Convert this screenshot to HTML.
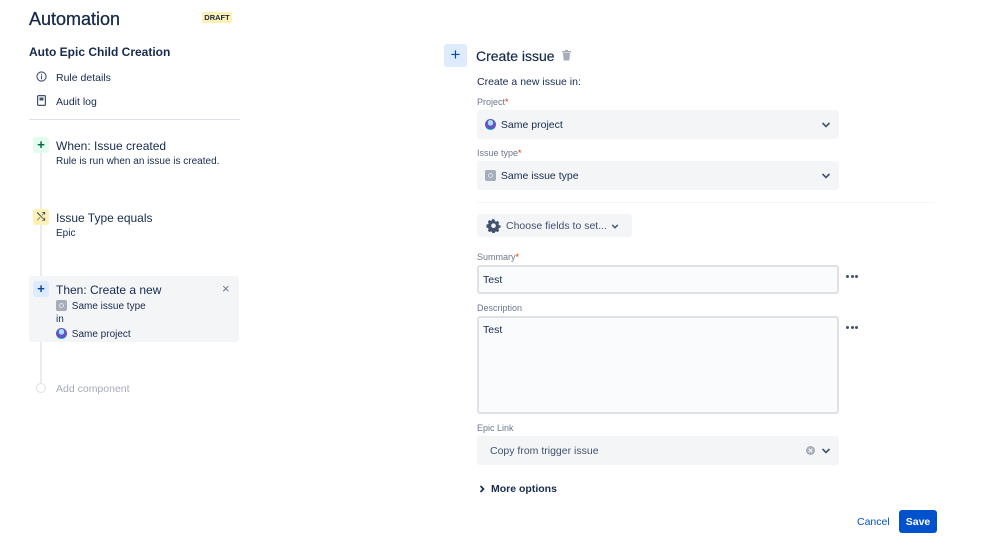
<!DOCTYPE html>
<html><head><meta charset="utf-8"><style>
*{box-sizing:border-box;margin:0;padding:0}
body{width:999px;height:553px;background:#fff;font-family:"Liberation Sans",sans-serif;color:#172b4d;position:relative;overflow:hidden}
.a{position:absolute;white-space:nowrap}
.ic{position:absolute;width:16px;height:16px;border-radius:3px;font-size:13px;line-height:16px;text-align:center}
.lbl{position:absolute;font-size:9px;color:#6b778c}
.lbl b{color:#de350b;font-weight:normal}
.sel{position:absolute;left:477px;width:362px;background:#f4f5f7;border-radius:3px;font-size:10.5px}
.chev{position:absolute;right:8px;top:50%;margin-top:-4px}
.inp{position:absolute;left:477px;width:362px;background:#fafbfc;border:2px solid #dfe1e6;border-radius:3px;font-size:10.5px;padding-left:4px}
.dots{position:absolute;left:846px;width:14px;height:3px}
.dots i{float:left;width:3px;height:3px;border-radius:50%;background:#42526e;margin-right:1.5px}
.proj{display:inline-block;width:11px;height:11px;border-radius:50%;background:radial-gradient(circle at 50% 35%,#a3e1ff 0 30%,#6554c0 31% 70%,#00b8d9 71%);vertical-align:-2px;margin-right:2px}
.typ{display:inline-block;width:11px;height:11px;border-radius:2px;background:#a5adba;vertical-align:-2px;position:relative;margin-right:2px}
.typ:after{content:"";position:absolute;left:3px;top:3px;width:5px;height:5px;border-radius:50%;border:1px solid #dfe1e6;box-sizing:border-box}
</style></head><body>
<div class="a" style="left:29px;top:9px;font-size:18px;-webkit-text-stroke:.3px #172b4d">Automation</div>
<div class="a" style="left:202px;top:12px;width:30px;height:11px;background:#fff0b3;border-radius:2px;font-size:7.5px;font-weight:bold;line-height:11px;text-align:center;color:#172b4d">DRAFT</div>
<div class="a" style="left:29px;top:45px;font-size:12px;font-weight:bold">Auto Epic Child Creation</div>
<svg class="a" style="left:36px;top:71px" width="11" height="11" viewBox="0 0 12 12"><circle cx="6" cy="6" r="5" fill="none" stroke="#42526e" stroke-width="1.2"/><rect x="5.4" y="5" width="1.2" height="4" fill="#42526e"/><circle cx="6" cy="3.5" r=".7" fill="#42526e"/></svg>
<div class="a" style="left:56px;top:72px;font-size:10.5px">Rule details</div>
<svg class="a" style="left:37px;top:95px" width="9" height="11" viewBox="0 0 9 11"><rect x=".6" y=".6" width="7.8" height="9.8" rx="1" fill="none" stroke="#42526e" stroke-width="1.2"/><rect x="2.5" y="2.5" width="4" height="3" fill="#42526e"/></svg>
<div class="a" style="left:56px;top:96px;font-size:10.5px">Audit log</div>
<div class="a" style="left:29px;top:119px;width:211px;height:1px;background:#dfe1e6"></div>
<div class="a" style="left:40px;top:150px;width:2px;height:236px;background:#ebecf0"></div>
<div class="a" style="left:29px;top:276px;width:210px;height:66px;background:#f4f5f7;border-radius:3px"></div>
<div class="ic" style="left:33px;top:137px;background:#e3fcef;color:#006644;font-weight:bold">+</div>
<div class="a" style="left:56px;top:139px;font-size:12px">When: Issue created</div>
<div class="a" style="left:56px;top:156px;font-size:10px">Rule is run when an issue is created.</div>
<div class="ic" style="left:33px;top:209px;background:#fff0b3;color:#172b4d;font-size:11px">⤭</div>
<div class="a" style="left:56px;top:211px;font-size:12px">Issue Type equals</div>
<div class="a" style="left:56px;top:228px;font-size:10px">Epic</div>
<div class="ic" style="left:33px;top:281px;background:#deebff;color:#0747a6;font-weight:bold">+</div>
<div class="a" style="left:56px;top:283px;font-size:12px">Then: Create a new</div>
<div class="a" style="left:222px;top:281px;font-size:13px;color:#6b778c">×</div>
<div class="a" style="left:56px;top:300px;font-size:10px"><span class="typ"></span> Same issue type</div>
<div class="a" style="left:56px;top:314px;font-size:10px">in</div>
<div class="a" style="left:56px;top:328px;font-size:10px"><span class="proj"></span> Same project</div>
<div class="a" style="left:36px;top:383px;width:10px;height:10px;border-radius:50%;border:1px solid #dfe1e6;background:#fff"></div>
<div class="a" style="left:56px;top:383px;font-size:10.5px;color:#a5adba">Add component</div>

<div class="a" style="left:444px;top:44px;width:23px;height:23px;background:#deebff;border-radius:3px;color:#0747a6;font-size:17px;line-height:22px;text-align:center">+</div>
<div class="a" style="left:476px;top:48px;font-size:14px;-webkit-text-stroke:.2px #172b4d">Create issue</div>
<svg class="a" style="left:562px;top:50px" width="9" height="11" viewBox="0 0 9 11"><rect x="0" y="1" width="9" height="1.5" fill="#a5adba"/><rect x="3" y="0" width="3" height="1.5" fill="#a5adba"/><path d="M1 3h7l-.7 7.5H1.7z" fill="#a5adba"/></svg>
<div class="a" style="left:477px;top:76px;font-size:10.5px">Create a new issue in:</div>
<div class="lbl" style="left:477px;top:97px">Project<b>*</b></div>
<div class="sel" style="top:110px;height:29px"><div class="a" style="left:8px;top:9px"><span class="proj"></span> Same project</div><svg class="chev" width="10" height="8" viewBox="0 0 10 8"><path d="M1.5 2l3.5 3.5L8.5 2" fill="none" stroke="#42526e" stroke-width="1.6"/></svg></div>
<div class="lbl" style="left:477px;top:148px">Issue type<b>*</b></div>
<div class="sel" style="top:161px;height:29px"><div class="a" style="left:8px;top:9px"><span class="typ"></span> Same issue type</div><svg class="chev" width="10" height="8" viewBox="0 0 10 8"><path d="M1.5 2l3.5 3.5L8.5 2" fill="none" stroke="#42526e" stroke-width="1.6"/></svg></div>
<div class="a" style="left:477px;top:202px;width:458px;height:1px;background:#f4f5f7"></div>
<div class="a" style="left:477px;top:214px;width:155px;height:23px;background:#f4f5f7;border-radius:3px;font-size:10.5px;line-height:25px;padding-left:29px;color:#42526e">Choose fields to set...</div>
<svg class="a" style="left:486px;top:218px" width="15" height="15" viewBox="0 0 16 16"><path d="M8 1.5l1.3.2.3 1.7 1.2.6 1.5-.9 1.8 1.8-.9 1.5.6 1.2 1.7.3v2.4l-1.7.3-.6 1.2.9 1.5-1.8 1.8-1.5-.9-1.2.6-.3 1.7H6.7l-.3-1.7-1.2-.6-1.5.9-1.8-1.8.9-1.5-.6-1.2-1.7-.3V6.9l1.7-.3.6-1.2-.9-1.5 1.8-1.8 1.5.9 1.2-.6.3-1.7z" fill="#42526e"/><circle cx="8" cy="8.2" r="2.5" fill="#f4f5f7"/></svg>
<svg class="a" style="left:611px;top:223px" width="8" height="7" viewBox="0 0 10 8"><path d="M1.5 2l3.5 3.5L8.5 2" fill="none" stroke="#42526e" stroke-width="1.8"/></svg>
<div class="lbl" style="left:477px;top:252px">Summary<b>*</b></div>
<div class="inp" style="top:265px;height:29px;line-height:27px">Test</div>
<div class="dots" style="top:275px"><i></i><i></i><i></i></div>
<div class="lbl" style="left:477px;top:303px">Description</div>
<div class="inp" style="top:316px;height:98px;padding-top:6px">Test</div>
<div class="dots" style="top:326px"><i></i><i></i><i></i></div>
<div class="lbl" style="left:477px;top:423px">Epic Link</div>
<div class="sel" style="top:436px;height:29px"><div class="a" style="left:13px;top:9px;color:#42526e">Copy from trigger issue</div>
<svg class="a" style="left:329px;top:10px" width="9" height="9" viewBox="0 0 10 10"><circle cx="5" cy="5" r="5" fill="#a5adba"/><path d="M3 3l4 4M7 3l-4 4" stroke="#f4f5f7" stroke-width="1.3"/></svg>
<svg class="chev" width="10" height="8" viewBox="0 0 10 8"><path d="M1.5 2l3.5 3.5L8.5 2" fill="none" stroke="#42526e" stroke-width="1.6"/></svg></div>
<svg class="a" style="left:479px;top:485px" width="6" height="8" viewBox="0 0 6 8"><path d="M1.5 1l3 3-3 3" fill="none" stroke="#172b4d" stroke-width="1.6"/></svg>
<div class="a" style="left:491px;top:483px;font-size:10.5px;font-weight:bold;color:#172b4d">More options</div>
<div class="a" style="left:857px;top:516px;font-size:10.5px;color:#0052cc">Cancel</div>
<div class="a" style="left:899px;top:510px;width:38px;height:23px;background:#0052cc;border-radius:3px;color:#fff;font-size:10.5px;font-weight:bold;line-height:24px;text-align:center">Save</div>
</body></html>
